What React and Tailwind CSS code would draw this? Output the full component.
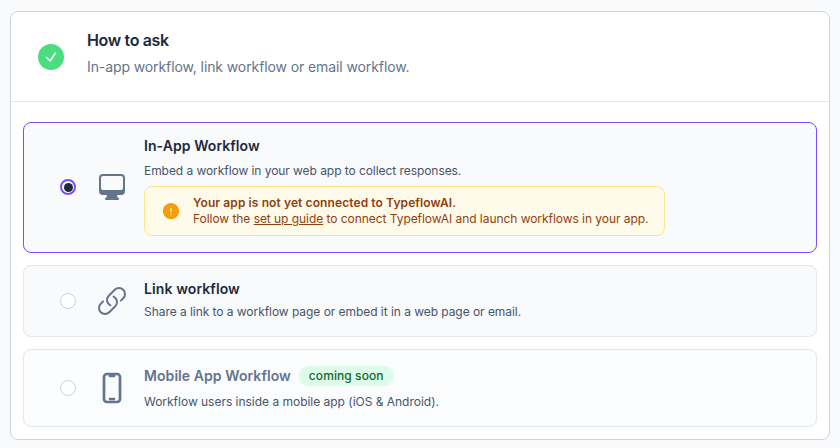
import React from "react";
import { HiComputerDesktop, HiOutlineLink, HiOutlineDevicePhoneMobile, HiExclamationCircle, HiCheck } from "react-icons/hi2";

function Radio({ checked }) {
  return checked ? (
    <span className="mb-px flex h-4 w-4 shrink-0 items-center justify-center rounded-full border-2 border-[#7c4dff] bg-white">
      <span className="h-[9px] w-[9px] rounded-full bg-slate-800" />
    </span>
  ) : (
    <span className="h-4 w-4 shrink-0 rounded-full border border-slate-300 bg-white" />
  );
}

export default function App() {
  return (
    <div className="h-[448px] w-[840px] overflow-hidden bg-[#f8fafc] pl-[10px] pr-[10px] pt-[11px] font-['Inter',sans-serif]">
      <div className="h-[429px] w-[820px] rounded-lg border border-[#cbd5e1] bg-white">
        <div className="flex h-[90px] items-center border-b border-[#e2e8f0] pl-[27px]">
          <span className="flex h-[26px] w-[26px] items-center justify-center rounded-full bg-[#4ade80] text-white">
            <HiCheck className="h-[14px] w-[14px]" style={{ strokeWidth: 1.5 }} />
          </span>
          <div className="ml-[23px] -mt-[9px]">
            <h2 className="text-base font-semibold leading-6 tracking-[-0.35px] text-[#1e293b]">How to ask</h2>
            <p className="mt-[5px] text-sm leading-5 tracking-[-0.1px] text-[#64748b]">In-app workflow, link workflow or email workflow.</p>
          </div>
        </div>
        <div className="flex flex-col gap-3 px-3 pt-5">
          <div className="flex h-[131px] items-center rounded-lg border border-[#7c4dff] bg-[#f8fafc] pl-9">
            <Radio checked />
            <HiComputerDesktop className="mb-px ml-5 h-8 w-8 text-[#64748b]" />
            <div className="ml-4 pb-1">
              <p className="text-sm font-semibold leading-5 tracking-[0.07px] text-[#1e293b]">In-App Workflow</p>
              <p className="mt-[7px] text-xs leading-4 tracking-[-0.06px] text-[#475569]">Embed a workflow in your web app to collect responses.</p>
              <div className="mt-[7px] flex h-[50px] w-[521px] items-center rounded-lg border border-[#fde68a] bg-[#fffbeb] pl-4">
                <HiExclamationCircle className="h-5 w-5 text-[#f59e0b]" />
                <div className="ml-3 text-xs leading-4 tracking-[-0.05px] text-[#92400e]">
                  <p className="font-semibold tracking-[0.1px]">Your app is not yet connected to TypeflowAI.</p>
                  <p>Follow the <span className="underline">set up guide</span> to connect TypeflowAI and launch workflows in your app.</p>
                </div>
              </div>
            </div>
          </div>
          <div className="flex h-[72px] items-center rounded-lg border border-[#e2e8f0] bg-[#f8fafc] pl-9">
            <Radio />
            <HiOutlineLink className="ml-5 h-8 w-8 text-[#64748b]" />
            <div className="ml-4 pb-1">
              <p className="text-sm font-semibold leading-5 tracking-[0.1px] text-[#1e293b]">Link workflow</p>
              <p className="mt-[5px] text-xs leading-4 tracking-[-0.05px] text-[#475569]">Share a link to a workflow page or embed it in a web page or email.</p>
            </div>
          </div>
          <div className="flex h-[78px] items-center rounded-lg border border-[#e2e8f0] bg-[#fbfcfd] pl-9">
            <Radio />
            <HiOutlineDevicePhoneMobile className="ml-5 h-8 w-8 text-[#64748b]" style={{ strokeWidth: 2 }} />
            <div className="ml-4 pb-px">
              <div className="flex items-center">
                <p className="text-sm font-semibold leading-5 tracking-[0.07px] text-[#64748b]">Mobile App Workflow</p>
                <span className="ml-2 flex h-5 items-center rounded-full bg-[#dcfce7] px-[10px] text-xs font-medium tracking-[0.08px] text-[#166534]">coming soon</span>
              </div>
              <p className="mt-2 text-xs leading-4 tracking-[-0.02px] text-[#475569]">Workflow users inside a mobile app (iOS &amp; Android).</p>
            </div>
          </div>
        </div>
      </div>
    </div>
  );
}
